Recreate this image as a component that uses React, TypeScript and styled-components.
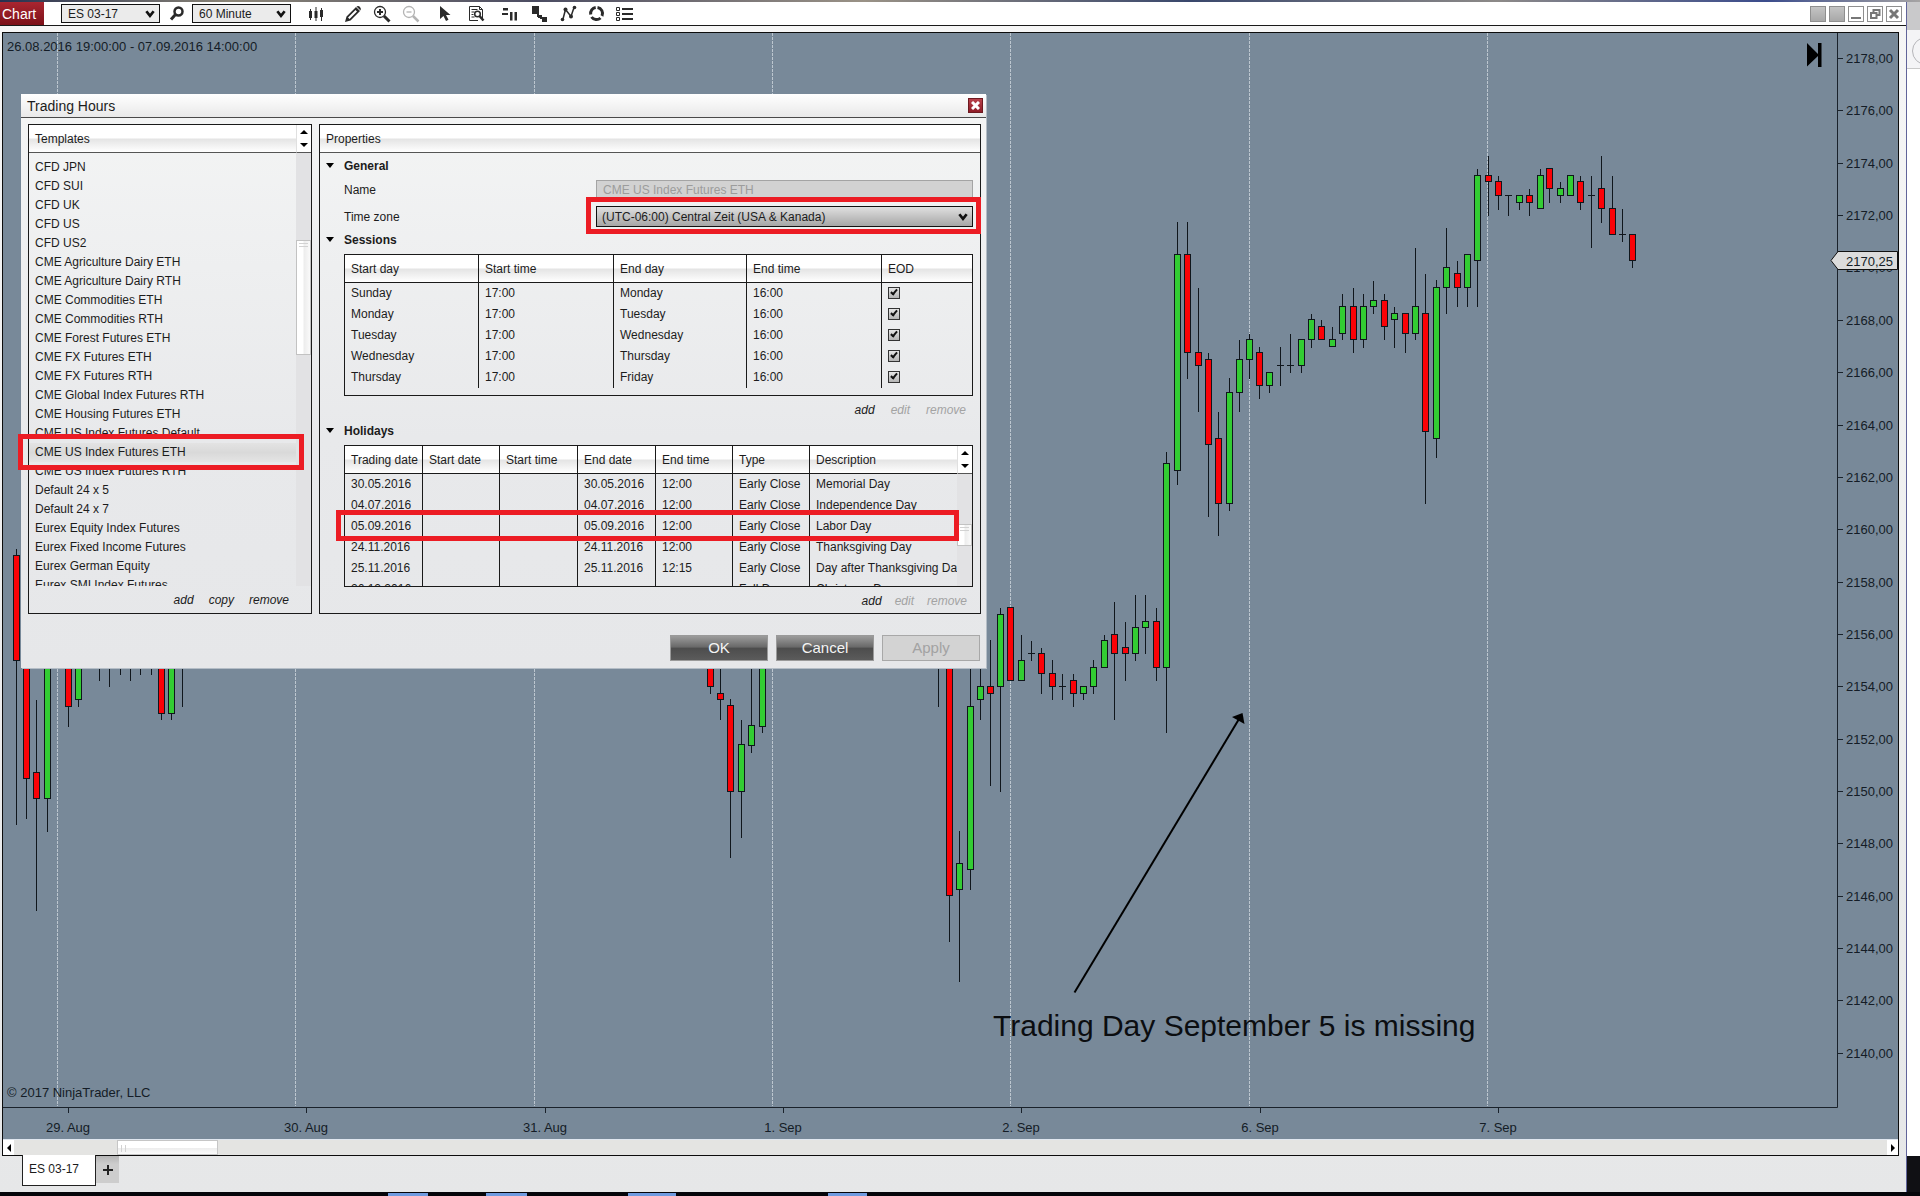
import React from "react";
import styled, { createGlobalStyle, css } from "styled-components";

const GlobalStyle = createGlobalStyle`
  *, *::before, *::after { box-sizing: border-box; }
  body {
    margin: 0;
    background: #08080c;
    font-family: "Liberation Sans", Arial, sans-serif;
    font-size: 12px;
    line-height: 16px;
    color: #1c1c1c;
  }
  button, input, select { font: inherit; color: inherit; }
`;

const headerGradient = css`
  background: linear-gradient(#ffffff 0%, #ffffff 48%, #e4e4e4 52%, #ffffff 100%);
`;

/* ---------- desktop behind the window ---------- */

const Desktop = styled.div`
  display: grid;
  grid-template-columns: minmax(0, 1fr) 13px;
  grid-template-rows: 2px minmax(0, 1fr) 4px;
  height: 100vh;
  overflow: hidden;
`;

const Wallpaper = styled.div`
  grid-column: 1 / -1;
  background: linear-gradient(90deg, #27304f, #8b8577 12%, #4b4c62 28%, #9a9286 45%, #39476c 62%, #8d8a88 78%, #3b4c8c 92%, #a6a4a4);
`;

const Taskbar = styled.div`
  grid-column: 1 / -1;
  background: #05050a;
`;

const TaskSvg = styled.svg`
  display: block;
  width: 100%;
  height: 4px;
`;

const Neighbour = styled.div`
  display: flex;
  flex-direction: column;
  background: #ffffff;
  overflow: hidden;
`;

const NeighbourTitle = styled.div`
  height: 28px;
  background: #c9c9cb;
`;

const NeighbourBar = styled.div`
  height: 39px;
  padding: 7px 0 0 5px;
  background: #f4f4f6;
  border-bottom: 1px solid #c9c9c9;
`;

const NeighbourRing = styled.div`
  width: 28px;
  height: 28px;
  border: 1px solid #b5b5b9;
  border-radius: 50%;
`;

const NeighbourBase = styled.div`
  height: 36px;
  margin-top: auto;
  background: #101014;
`;

const Window = styled.div`
  display: flex;
  flex-direction: column;
  min-height: 0;
  background: linear-gradient(#f6f6f6, #e6e7e8);
  border-right: 1px solid #61649a;
`;

/* ---------- toolbar ---------- */

const Toolbar = styled.header`
  display: flex;
  align-items: center;
  flex: none;
  height: 24px;
  padding-right: 4px;
  background: #ffffff;
  border-bottom: 1px solid #1a1a1a;
`;

const Badge = styled.div`
  display: flex;
  align-items: center;
  height: 23px;
  width: 44px;
  padding-left: 2px;
  margin-right: 17px;
  font-size: 14px;
  color: #ffffff;
  background: linear-gradient(#a92630, #7c1019);
`;

const SelectBox = styled.div`
  position: relative;
  width: 99px;
`;

const ToolSelect = styled.select`
  display: block;
  width: 100%;
  height: 19px;
  padding: 0 0 0 6px;
  appearance: none;
  border: 1px solid #111;
  border-radius: 0;
  background: #ebebeb;
`;

const Chevron = styled.svg`
  position: absolute;
  right: 5px;
  top: 50%;
  width: 10px;
  height: 8px;
  margin-top: -4px;
  fill: none;
  stroke: #111;
  stroke-width: 3;
  pointer-events: none;
`;

const IconButton = styled.button`
  display: grid;
  place-items: center;
  width: 20px;
  height: 20px;
  padding: 0;
  border: 0;
  background: none;
  color: #2a2a2a;
  &:disabled { color: #b4b4b4; }
  svg { display: block; fill: currentColor; stroke: none; }
`;

const SearchButton = styled(IconButton)`
  width: 20px;
  margin: 0 6px;
`;

const Tools = styled.div<{ $gap?: number; $lead?: number }>`
  display: flex;
  align-items: center;
  gap: ${(p) => p.$gap ?? 9}px;
  margin-left: ${(p) => p.$lead ?? 15}px;
`;

const ToolPair = styled.div`
  display: flex;
  gap: 17px;
`;

const WindowButtons = styled.div`
  display: flex;
  gap: 3px;
  margin-left: auto;
`;

const WindowButton = styled.button<{ $filled?: boolean }>`
  display: grid;
  place-items: center;
  width: 16px;
  height: 16px;
  padding: 0;
  border: 1px solid #8f8f8f;
  background: ${(p) => (p.$filled ? "linear-gradient(#c4c4c4, #a8a8a8)" : "#ffffff")};
  svg { display: block; fill: none; stroke: #777; stroke-width: 2; }
`;

/* ---------- chart ---------- */

const Body = styled.main`
  display: flex;
  flex-direction: column;
  flex: 1;
  min-height: 0;
  padding: 6px 7px 0 2px;
`;

const Frame = styled.section`
  position: relative;
  display: flex;
  flex-direction: column;
  flex: 1;
  min-height: 0;
  border: 1px solid #0c0c0c;
`;

const ChartSvg = styled.svg`
  display: block;
  flex: 1;
  width: 100%;
  min-height: 0;
  background: #788999;
  font-size: 13px;
  fill: #141c26;
`;

const ScrollStrip = styled.div`
  display: flex;
  flex: none;
  height: 16px;
  border-top: 1px solid #dfe6ef;
  background: #e4e4e2;
`;

const StripButton = styled.button`
  display: grid;
  place-items: center;
  width: 11px;
  padding: 0;
  border: 0;
  background: #ffffff;
`;

const StripTrack = styled.div`
  flex: 1;
  padding-left: 103px;
`;

const StripThumb = styled.div`
  width: 101px;
  height: 15px;
  padding: 4px 3px;
  border: 1px solid #c6c6c6;
  background: linear-gradient(#ffffff 50%, #ececec 52%, #fbfbfb);
`;

const Grip = styled.div<{ $vertical?: boolean }>`
  ${(p) => p.$vertical
    ? "width: 5px; height: 7px; border-left: 1px solid #d2d2d2; border-right: 1px solid #d2d2d2;"
    : "width: 100%; height: 4px; border-top: 1px solid #d2d2d2; border-bottom: 1px solid #d2d2d2;"}
`;

const TabRow = styled.nav`
  display: flex;
  align-items: flex-start;
  flex: none;
  height: 36px;
  padding-left: 20px;
`;

const Tab = styled.button`
  z-index: 1;
  width: 74px;
  height: 31px;
  margin-top: -1px;
  padding: 0 8px 2px 6px;
  text-align: left;
  border: 1px solid #222;
  border-top: 0;
  background: #ffffff;
`;

const AddTab = styled.button`
  display: grid;
  place-items: center;
  width: 23px;
  height: 27px;
  padding: 0;
  border: 0;
  background: linear-gradient(#b5b5b5, #cdcdcd 30%);
`;

/* ---------- dialog ---------- */

const Dialog = styled.div`
  position: absolute;
  left: 18px;
  top: 61px;
  width: 965px;
  max-width: calc(100% - 36px);
  background: linear-gradient(#f4f5f5, #e8e9eb 60%, #e6e7e9);
  box-shadow: 1px 1px 0 #b4bdc6;
`;

const DialogTitle = styled.div`
  display: flex;
  align-items: center;
  justify-content: space-between;
  height: 24px;
  padding: 0 3px 0 6px;
  font-size: 14px;
  background: linear-gradient(#ffffff, #e9e9e9);
  border-bottom: 1px solid #4a4a4a;
`;

const CloseButton = styled.button`
  display: grid;
  place-items: center;
  width: 15px;
  height: 15px;
  padding: 0;
  border: 1px solid #6d1a20;
  background: linear-gradient(#b9414b, #8f1c27);
`;

const Columns = styled.div`
  display: grid;
  grid-template-columns: 284px minmax(0, 1fr);
  gap: 7px;
  padding: 6px 5px 0 7px;
`;

const Panel = styled.section`
  display: flex;
  flex-direction: column;
  border: 1px solid #1a1a1a;
`;

const PanelHeader = styled.h2`
  flex: none;
  height: 28px;
  margin: 0;
  padding: 6px;
  font-size: 12px;
  font-weight: 400;
  border-bottom: 1px solid #555;
  ${headerGradient}
`;

const Scrollable = styled.div`
  display: flex;
  flex: none;
`;

const Grow = styled.div`
  flex: 1;
  min-width: 0;
`;

const VBar = styled.div`
  display: flex;
  flex-direction: column;
  flex: none;
  width: 15px;
  background: #e2e2e4;
`;

const VArrows = styled.div`
  display: flex;
  flex-direction: column;
  justify-content: space-evenly;
  height: 28px;
  background: #ffffff;
  border-left: 1px solid #e0e0e0;
  border-bottom: 1px solid #555;
`;

const VArrow = styled.button`
  display: grid;
  place-items: center;
  height: 12px;
  padding: 0;
  border: 0;
  background: none;
`;

const VThumb = styled.div<{ $offset: number; $size: number }>`
  height: ${(p) => p.$size}px;
  margin-top: ${(p) => p.$offset}px;
  padding: 2px;
  border: 1px solid #c2c2c2;
  background: linear-gradient(90deg, #ffffff 45%, #ededed 55%, #fafafa);
`;

const TemplateList = styled.ul`
  height: 433px;
  margin: 0;
  padding: 5px 0 0;
  overflow: hidden;
  list-style: none;
`;

const TemplateItem = styled.li<{ $selected?: boolean }>`
  height: 19px;
  padding: 1px 6px;
  white-space: nowrap;
  ${(p) => p.$selected && "background: linear-gradient(#e3e3e3, #d9d9d9 50%, #e4e4e4);"}
`;

const Actions = styled.div<{ $gap: number; $end: number }>`
  display: flex;
  justify-content: flex-end;
  gap: ${(p) => p.$gap}px;
  height: 22px;
  padding: 6px ${(p) => p.$end}px 0 0;
`;

const ActionButton = styled.button`
  padding: 0;
  border: 0;
  background: none;
  font-style: italic;
  line-height: 16px;
  &:disabled { color: #a3a3a3; }
`;

const Properties = styled.div`
  padding: 0 7px 4px 6px;
`;

const Group = styled.h3`
  display: flex;
  align-items: center;
  gap: 10px;
  height: 27px;
  margin: 0;
  padding-bottom: 2px;
  font-size: 12px;
  font-weight: 700;
`;

const Content = styled.div`
  padding-left: 18px;
`;

const Fields = styled.div`
  display: grid;
  grid-template-columns: 252px minmax(0, 1fr);
  row-gap: 7px;
  align-items: center;
`;

const NameInput = styled.input`
  width: 100%;
  height: 19px;
  padding: 0 6px;
  border: 1px solid #a4a4a4;
  border-radius: 0;
  background: #d2d2d2;
  color: #9c9c9c;
`;

const ZoneBox = styled.div`
  position: relative;
`;

const ZoneSelect = styled.select`
  display: block;
  width: 100%;
  height: 21px;
  padding: 0 5px;
  appearance: none;
  border: 1px solid #111;
  border-radius: 0;
  background: linear-gradient(#e0e0e0, #a6a6a6);
`;

const Grid = styled.div`
  display: flex;
  height: 142px;
  overflow: hidden;
  border: 1px solid #1a1a1a;
`;

const Table = styled.table`
  width: 100%;
  table-layout: fixed;
  border-spacing: 0;
`;

const Th = styled.th<{ $w?: number }>`
  width: ${(p) => (p.$w ? p.$w + "px" : "auto")};
  height: 28px;
  padding: 0 5px 0 6px;
  overflow: hidden;
  white-space: nowrap;
  text-align: left;
  font-weight: 400;
  border-right: 1px solid #1a1a1a;
  border-bottom: 1px solid #1a1a1a;
  ${headerGradient}
  &:last-child { border-right: 0; }
`;

const Td = styled.td`
  height: 21px;
  padding: 0 5px 1px 6px;
  overflow: hidden;
  white-space: nowrap;
  border-right: 1px solid #1a1a1a;
  &:last-child { border-right: 0; }
`;

const Check = styled.input`
  display: block;
  position: relative;
  width: 12px;
  height: 12px;
  margin: 0;
  appearance: none;
  border: 1px solid #333;
  background: linear-gradient(#e6e6e6, #b4b4b4);
  &:checked::after {
    content: "";
    position: absolute;
    left: 3px;
    top: 0;
    width: 4px;
    height: 7px;
    border: solid #111;
    border-width: 0 2px 2px 0;
    transform: rotate(40deg);
  }
`;

const DialogButtons = styled.div`
  display: flex;
  justify-content: flex-end;
  gap: 8px;
  padding: 21px 6px 7px 0;
`;

const DialogButton = styled.button`
  width: 98px;
  height: 26px;
  padding: 0 0 1px;
  font-size: 15px;
  color: #f4f4f4;
  border: 1px solid #9a9a9a;
  background: linear-gradient(#9c9c9c, #6a6a6a 45%, #4d4d4d 52%, #5b5b5b);
  &:disabled {
    color: #a2a2a2;
    border-color: #a8a8a8;
    background: #d3d3d3;
  }
`;

const Marker = styled.div<{ $x: number; $y: number; $w: number; $h: number }>`
  position: absolute;
  left: ${(p) => p.$x}px;
  top: ${(p) => p.$y}px;
  width: ${(p) => p.$w}px;
  height: ${(p) => p.$h}px;
  border: 5px solid #ec1c24;
  pointer-events: none;
`;

/* ---------- data ---------- */

const templates = [
  "CFD JPN", "CFD SUI", "CFD UK", "CFD US", "CFD US2",
  "CME Agriculture Dairy ETH", "CME Agriculture Dairy RTH",
  "CME Commodities ETH", "CME Commodities RTH", "CME Forest Futures ETH",
  "CME FX Futures ETH", "CME FX Futures RTH", "CME Global Index Futures RTH",
  "CME Housing Futures ETH", "CME US Index Futures Default",
  "CME US Index Futures ETH", "CME US Index Futures RTH",
  "Default 24 x 5", "Default 24 x 7", "Eurex Equity Index Futures",
  "Eurex Fixed Income Futures", "Eurex German Equity", "Eurex SMI Index Futures",
];

const sessions = [
  ["Sunday", "17:00", "Monday", "16:00"],
  ["Monday", "17:00", "Tuesday", "16:00"],
  ["Tuesday", "17:00", "Wednesday", "16:00"],
  ["Wednesday", "17:00", "Thursday", "16:00"],
  ["Thursday", "17:00", "Friday", "16:00"],
];

const holidayColumns: [string, number?][] = [
  ["Trading date", 78], ["Start date", 77], ["Start time", 78], ["End date", 78],
  ["End time", 77], ["Type", 77], ["Description"],
];

const holidays = [
  ["30.05.2016", "", "", "30.05.2016", "12:00", "Early Close", "Memorial Day"],
  ["04.07.2016", "", "", "04.07.2016", "12:00", "Early Close", "Independence Day"],
  ["05.09.2016", "", "", "05.09.2016", "12:00", "Early Close", "Labor Day"],
  ["24.11.2016", "", "", "24.11.2016", "12:00", "Early Close", "Thanksgiving Day"],
  ["25.11.2016", "", "", "25.11.2016", "12:15", "Early Close", "Day after Thanksgiving Day"],
  ["26.12.2016", "", "", "", "", "Full Day", "Christmas Day"],
];

/* x, high, body top, body bottom, low, kind (r: down, g: up, d: unchanged, w: wick only) */
type Candle = [number, number, number, number, number, "r" | "g" | "d" | "w"];
const candles: Candle[] = [
  [16, 549, 555, 660, 824, "r"], [26, 600, 600, 778, 818, "r"], [36, 700, 772, 798, 910, "r"],
  [47, 600, 600, 798, 831, "g"], [68, 600, 600, 706, 726, "r"], [78, 600, 600, 699, 706, "g"],
  [99, 640, 640, 640, 680, "w"], [109, 640, 640, 640, 686, "w"], [120, 640, 640, 640, 674, "w"],
  [130, 640, 640, 640, 680, "w"], [140, 640, 640, 640, 674, "w"], [151, 640, 640, 640, 674, "w"],
  [161, 620, 620, 713, 719, "r"], [171, 620, 620, 713, 719, "g"], [182, 640, 640, 640, 706, "w"],
  [710, 640, 640, 686, 693, "r"], [720, 640, 693, 699, 719, "r"], [730, 699, 705, 791, 857, "r"],
  [741, 720, 744, 791, 837, "g"], [751, 640, 725, 745, 752, "g"], [762, 600, 640, 726, 732, "g"],
  [938, 600, 640, 640, 706, "w"], [949, 600, 620, 895, 941, "r"], [959, 831, 863, 889, 981, "g"],
  [970, 600, 706, 869, 889, "g"], [980, 640, 686, 699, 719, "g"], [990, 640, 686, 693, 785, "r"],
  [1000, 608, 614, 686, 791, "g"], [1010, 607, 607, 680, 680, "r"], [1021, 635, 660, 680, 680, "g"],
  [1031, 641, 653, 653, 660, "d"], [1041, 648, 653, 673, 693, "r"], [1052, 660, 673, 686, 699, "r"],
  [1062, 674, 686, 686, 699, "d"], [1073, 674, 680, 693, 706, "r"], [1083, 686, 686, 693, 699, "g"],
  [1093, 660, 667, 686, 693, "g"], [1104, 635, 640, 667, 667, "g"], [1114, 602, 634, 653, 719, "r"],
  [1125, 622, 647, 653, 680, "r"], [1135, 595, 627, 653, 660, "g"], [1145, 595, 621, 627, 653, "g"],
  [1156, 608, 621, 667, 680, "r"], [1166, 452, 463, 667, 732, "g"], [1177, 222, 254, 470, 484, "g"],
  [1187, 222, 254, 352, 378, "r"], [1198, 288, 352, 365, 411, "r"], [1208, 353, 359, 444, 516, "r"],
  [1218, 412, 438, 503, 535, "r"], [1229, 378, 392, 503, 510, "g"], [1239, 340, 359, 392, 411, "g"],
  [1249, 334, 339, 359, 378, "g"], [1259, 347, 352, 385, 398, "r"], [1269, 372, 372, 385, 392, "g"],
  [1280, 347, 365, 365, 385, "d"], [1290, 334, 365, 365, 372, "d"], [1301, 339, 339, 365, 372, "g"],
  [1311, 314, 319, 339, 347, "g"], [1321, 320, 326, 339, 339, "r"], [1332, 327, 339, 346, 346, "g"],
  [1342, 294, 306, 333, 339, "g"], [1353, 288, 306, 339, 352, "r"], [1363, 294, 306, 339, 347, "g"],
  [1373, 281, 300, 306, 313, "g"], [1384, 294, 300, 326, 339, "r"], [1394, 307, 313, 319, 347, "g"],
  [1405, 313, 313, 333, 352, "r"], [1415, 248, 306, 333, 339, "g"], [1425, 274, 313, 431, 503, "r"],
  [1436, 280, 287, 438, 457, "g"], [1446, 228, 267, 287, 313, "g"], [1457, 261, 273, 287, 306, "r"],
  [1467, 254, 254, 287, 306, "g"], [1477, 169, 175, 260, 306, "g"], [1488, 156, 175, 181, 215, "r"],
  [1498, 176, 181, 195, 209, "r"], [1508, 195, 195, 195, 215, "d"], [1519, 195, 195, 202, 209, "g"],
  [1529, 189, 195, 202, 215, "r"], [1540, 169, 175, 208, 208, "g"], [1549, 168, 168, 188, 202, "r"],
  [1560, 182, 188, 195, 202, "g"], [1570, 175, 175, 195, 195, "g"], [1580, 176, 181, 202, 209, "r"],
  [1591, 176, 195, 195, 247, "d"], [1601, 156, 188, 208, 222, "r"], [1612, 176, 208, 234, 234, "r"],
  [1622, 209, 234, 234, 241, "d"], [1632, 234, 234, 260, 267, "r"],
];

const days: [number, string][] = [
  [57, "29. Aug"], [295, "30. Aug"], [534, "31. Aug"], [772, "1. Sep"],
  [1010, "2. Sep"], [1249, "6. Sep"], [1487, "7. Sep"],
];

const prices = Array.from({ length: 20 }, (_, i) => 2178 - i * 2);
const priceY = (price: number) => Math.round(58 + (2178 - price) * 26.18);

/* ---------- parts ---------- */

function PriceChart() {
  return (
    <ChartSvg viewBox="3 33 1895 1106" preserveAspectRatio="none" role="img" aria-label="ES 03-17, 60 Minute">
      {days.map(([x]) => (
        <line key={x} x1={x + 0.5} x2={x + 0.5} y1={33} y2={1106} stroke="#bcc6cf" strokeDasharray="3 1" />
      ))}
      <text x={7} y={51}>26.08.2016 19:00:00 - 07.09.2016 14:00:00</text>
      <text x={7} y={1097}>© 2017 NinjaTrader, LLC</text>
      {candles.map(([x, high, top, bottom, low, kind]) => (
        <g key={x} stroke="#10161c">
          <line x1={x + 0.5} x2={x + 0.5} y1={high} y2={low + 1} />
          {kind === "d" && <line x1={x - 3} x2={x + 4} y1={top + 0.5} y2={top + 0.5} />}
          {(kind === "r" || kind === "g") && (
            <rect x={x - 2.5} y={top + 0.5} width={6} height={bottom - top} fill={kind === "r" ? "#fb0207" : "#33cc33"} />
          )}
        </g>
      ))}
      <path d="M3 1107.5H1837.5V33" fill="none" stroke="#1a222b" />
      {days.map(([x, label]) => (
        <g key={label}>
          <path d={`M${x + 11.5} 1108v5`} stroke="#1a222b" />
          <text x={x + 11} y={1132} textAnchor="middle">{label}</text>
        </g>
      ))}
      {prices.map((price) => (
        <g key={price}>
          <path d={`M1838 ${priceY(price) + 0.5}h5`} stroke="#1a222b" />
          <text x={1846} y={priceY(price) + 5}>{price},00</text>
        </g>
      ))}
      <path d="M1831 260.5L1838 251.5H1897.5V269.5H1838Z" fill="#dcdcdc" stroke="#111" />
      <text x={1846} y={266}>2170,25</text>
      <path d="M1807 43L1818 54V43H1821.500V67H1818V56L1807 66.500Z" fill="#000" />
      <path d="M1074.500 992.500L1239 719" stroke="#000" strokeWidth={2} />
      <path d="M1242.500 713L1232 717L1244.500 724Z" fill="#000" />
      <text x={993} y={1036} fontSize={30} fill="#0b0d10">Trading Day September 5 is missing</text>
    </ChartSvg>
  );
}

function Triangle({ d, w, h }: { d: string; w: number; h: number }) {
  return <svg width={w} height={h} viewBox={`0 0 ${w} ${h}`}><path d={d} fill="#000" /></svg>;
}

function Arrows({ name }: { name: string }) {
  return (
    <VArrows>
      <VArrow aria-label={`Scroll ${name} up`}><Triangle w={8} h={4} d="M0 4L4 0L8 4Z" /></VArrow>
      <VArrow aria-label={`Scroll ${name} down`}><Triangle w={8} h={4} d="M0 0H8L4 4Z" /></VArrow>
    </VArrows>
  );
}

function Down() {
  return <Chevron viewBox="0 0 11 8"><path d="M1.500 1L5.500 6L9.500 1" /></Chevron>;
}

function GroupTitle({ children }: { children: string }) {
  return <Group><Triangle w={8} h={5} d="M0 0H8L4 5Z" />{children}</Group>;
}

function MainToolbar() {
  return (
    <Toolbar>
      <Badge>Chart</Badge>
      <SelectBox>
        <ToolSelect aria-label="Instrument"><option>ES 03-17</option></ToolSelect>
        <Down />
      </SelectBox>
      <SearchButton aria-label="Find instrument">
        <svg width="15" height="15" viewBox="0 0 15 15"><g fill="none" stroke="currentColor"><circle cx="9.500" cy="5.500" r="4" strokeWidth="2.500" /><path d="M6.500 8.500L2 13.500" strokeWidth="3" /></g></svg>
      </SearchButton>
      <SelectBox>
        <ToolSelect aria-label="Interval"><option>60 Minute</option></ToolSelect>
        <Down />
      </SelectBox>
      <Tools>
        <ToolPair>
          <IconButton aria-label="Chart style">
            <svg width="16" height="16" viewBox="0 0 16 16"><path d="M1 5h3v7H1zM6.500 5h3v7h-3zM12 4h3v7h-3zM2 3h1v11H2zM7.500 1h1v14h-1zM13 2h1v13h-1z" /></svg>
          </IconButton>
          <IconButton aria-label="Drawing tools">
            <svg width="18" height="18" viewBox="0 0 18 18"><path d="M1 17l1.500-5.500L12 2l4 4-9.500 9.500zM4 12.500L5.500 14 13 6.500 11.500 5z" fillRule="evenodd" /><path d="M12.500 1.500q2-1 3.500.5t.500 3.500z" /></svg>
          </IconButton>
        </ToolPair>
        <IconButton aria-label="Zoom in">
          <svg width="18" height="18" viewBox="0 0 18 18"><g fill="none" stroke="currentColor"><circle cx="7" cy="7" r="5.500" strokeWidth="1.300" /><path d="M4 7h6M7 4v6" strokeWidth="2" /><path d="M11 11l5.500 5.500" strokeWidth="3" /></g></svg>
        </IconButton>
        <IconButton aria-label="Zoom out" disabled>
          <svg width="18" height="18" viewBox="0 0 18 18"><g fill="none" stroke="currentColor"><circle cx="7" cy="7" r="5.500" strokeWidth="1.300" /><path d="M4.500 7h5" strokeWidth="1.300" /><path d="M11 11l5.500 5.500" strokeWidth="2.500" /></g></svg>
        </IconButton>
      </Tools>
      <Tools $gap={11} $lead={14}>
        <IconButton aria-label="Cursor">
          <svg width="14" height="17" viewBox="0 0 14 17"><path d="M2 1v13l3.500-3 2.500 5 2.500-1.200L8 10h4.500z" /></svg>
        </IconButton>
        <IconButton aria-label="Data box">
          <svg width="17" height="17" viewBox="0 0 17 17"><g fill="none" stroke="currentColor"><path d="M10 15.500H1.500V1.500h10l3 3v9M11.500 1.500v3h3M3.500 4.500h6M3.500 7h3M3.500 9.500h2M3.500 12h3" /><circle cx="9.500" cy="9" r="2.800" strokeWidth="1.500" /><path d="M11.500 11l4 4.500" strokeWidth="2.500" /></g></svg>
        </IconButton>
      </Tools>
      <Tools $gap={9} $lead={14}>
        <IconButton aria-label="Strategies">
          <svg width="18" height="14" viewBox="0 0 18 14"><path d="M2 1h5v2.500H2zM1 6h6v2H1zM9 5h2.500v8.500H9zM13.500 5H16v8.500h-2.500z" /></svg>
        </IconButton>
        <IconButton aria-label="Chart trader">
          <svg width="17" height="16" viewBox="0 0 17 16"><path d="M1 0h7v8H1zM7 9h4v3H7zM11 11h5v5h-5zM6 7h2v4H6zM9 11h3v2H9z" /></svg>
        </IconButton>
        <IconButton aria-label="Indicators">
          <svg width="17" height="17" viewBox="0 0 17 17"><path d="M3 14L5.500 4.500l5.500 7 3-9" fill="none" stroke="currentColor" strokeWidth="1.500" /><circle cx="2.500" cy="14.500" r="1.800" /><circle cx="5.500" cy="4.500" r="2" /><circle cx="11" cy="11.500" r="2" /><circle cx="14.500" cy="2.500" r="1.800" /></svg>
        </IconButton>
      </Tools>
      <Tools $gap={8} $lead={8}>
        <IconButton aria-label="Reload">
          <svg width="17" height="17" viewBox="0 0 17 17"><g fill="none" stroke="currentColor" strokeWidth="3"><path d="M9.500 2.500a6 6 0 0 1 4.500 8.500M12.500 13a6 6 0 0 1-9-1M2.700 9.500a6 6 0 0 1 5-7" /></g></svg>
        </IconButton>
        <IconButton aria-label="Properties">
          <svg width="17" height="16" viewBox="0 0 17 16"><path d="M6 2h11v2H6zM6 7h11v2H6zM6 12h11v2H6z" /><g fill="none" stroke="currentColor"><path d="M.5 1.500h3v3h-3zM.5 6.500h3v3h-3zM.5 11.500h3v3h-3z" /></g></svg>
        </IconButton>
      </Tools>
      <WindowButtons>
        <WindowButton $filled aria-label="Instrument link" />
        <WindowButton $filled aria-label="Interval link" />
        <WindowButton aria-label="Minimize"><svg width="12" height="12"><path d="M1 10h10" /></svg></WindowButton>
        <WindowButton aria-label="Restore"><svg width="12" height="12"><path d="M4.500 4V2h6v5H8M2 5h5.500v5H2z" /></svg></WindowButton>
        <WindowButton aria-label="Close"><svg width="12" height="12"><path d="M2 2l8 8M10 2l-8 8" strokeWidth="3" /></svg></WindowButton>
      </WindowButtons>
    </Toolbar>
  );
}

function TradingHours() {
  return (
    <Dialog role="dialog" aria-label="Trading Hours">
      <DialogTitle>
        Trading Hours
        <CloseButton aria-label="Close dialog">
          <svg width="9" height="9" viewBox="0 0 9 9"><path d="M1 1l7 7M8 1L1 8" stroke="#fff" strokeWidth="3" /></svg>
        </CloseButton>
      </DialogTitle>
      <Columns>
        <Panel>
          <Scrollable>
            <Grow>
              <PanelHeader>Templates</PanelHeader>
              <TemplateList>
                {templates.map((name) => (
                  <TemplateItem key={name} $selected={name === "CME US Index Futures ETH"}>{name}</TemplateItem>
                ))}
              </TemplateList>
            </Grow>
            <VBar>
              <Arrows name="templates" />
              <VThumb $offset={87} $size={115}><Grip /></VThumb>
            </VBar>
          </Scrollable>
          <Actions $gap={15} $end={22}>
            <ActionButton>add</ActionButton>
            <ActionButton>copy</ActionButton>
            <ActionButton>remove</ActionButton>
          </Actions>
        </Panel>
        <Panel>
          <PanelHeader>Properties</PanelHeader>
          <Properties>
            <GroupTitle>General</GroupTitle>
            <Content>
              <Fields>
                <label htmlFor="template-name">Name</label>
                <NameInput id="template-name" disabled defaultValue="CME US Index Futures ETH" />
                <label htmlFor="time-zone">Time zone</label>
                <ZoneBox>
                  <ZoneSelect id="time-zone"><option>(UTC-06:00) Central Zeit (USA &amp; Kanada)</option></ZoneSelect>
                  <Down />
                </ZoneBox>
              </Fields>
            </Content>
            <GroupTitle>Sessions</GroupTitle>
            <Content>
              <Grid>
                <Grow>
                  <Table>
                    <thead>
                      <tr>
                        <Th $w={134}>Start day</Th>
                        <Th $w={135}>Start time</Th>
                        <Th $w={133}>End day</Th>
                        <Th $w={135}>End time</Th>
                        <Th>EOD</Th>
                      </tr>
                    </thead>
                    <tbody>
                      {sessions.map((row) => (
                        <tr key={row[0]}>
                          {row.map((value, i) => <Td key={i}>{value}</Td>)}
                          <Td><Check type="checkbox" defaultChecked aria-label={`EOD ${row[0]}`} /></Td>
                        </tr>
                      ))}
                    </tbody>
                  </Table>
                </Grow>
              </Grid>
              <Actions $gap={16} $end={7}>
                <ActionButton>add</ActionButton>
                <ActionButton disabled>edit</ActionButton>
                <ActionButton disabled>remove</ActionButton>
              </Actions>
            </Content>
            <GroupTitle>Holidays</GroupTitle>
            <Content>
              <Grid>
                <Grow>
                  <Table>
                    <thead>
                      <tr>{holidayColumns.map(([name, w]) => <Th key={name} $w={w}>{name}</Th>)}</tr>
                    </thead>
                    <tbody>
                      {holidays.map((row) => (
                        <tr key={row[0]}>{row.map((value, i) => <Td key={i}>{value}</Td>)}</tr>
                      ))}
                    </tbody>
                  </Table>
                </Grow>
                <VBar>
                  <Arrows name="holidays" />
                  <VThumb $offset={50} $size={22}><Grip /></VThumb>
                </VBar>
              </Grid>
              <Actions $gap={13} $end={6}>
                <ActionButton>add</ActionButton>
                <ActionButton disabled>edit</ActionButton>
                <ActionButton disabled>remove</ActionButton>
              </Actions>
            </Content>
          </Properties>
        </Panel>
      </Columns>
      <DialogButtons>
        <DialogButton>OK</DialogButton>
        <DialogButton>Cancel</DialogButton>
        <DialogButton disabled>Apply</DialogButton>
      </DialogButtons>
      <Marker $x={565} $y={103} $w={395} $h={37} />
      <Marker $x={-3} $y={340} $w={286} $h={36} />
      <Marker $x={315} $y={416} $w={623} $h={31} />
    </Dialog>
  );
}

export default function App() {
  return (
    <Desktop>
      <GlobalStyle />
      <Wallpaper />
      <Window>
        <MainToolbar />
        <Body>
          <Frame>
            <PriceChart />
            <ScrollStrip>
              <StripButton aria-label="Scroll left"><Triangle w={4} h={8} d="M4 0V8L0 4Z" /></StripButton>
              <StripTrack><StripThumb><Grip $vertical /></StripThumb></StripTrack>
              <StripButton aria-label="Scroll right"><Triangle w={4} h={8} d="M0 0V8L4 4Z" /></StripButton>
            </ScrollStrip>
            <TradingHours />
          </Frame>
          <TabRow>
            <Tab>ES 03-17</Tab>
            <AddTab aria-label="Add tab">
              <svg width="10" height="10" viewBox="0 0 10 10"><path d="M5 0v10M0 5h10" stroke="#222" strokeWidth="2" /></svg>
            </AddTab>
          </TabRow>
        </Body>
      </Window>
      <Neighbour>
        <NeighbourTitle />
        <NeighbourBar><NeighbourRing /></NeighbourBar>
        <NeighbourBase />
      </Neighbour>
      <Taskbar>
        <TaskSvg viewBox="0 0 1920 4" preserveAspectRatio="none">
          <path d="M388 1h40v3h-40zM486 1h41v3h-41zM628 1h48v3h-48zM828 1h39v3h-39z" fill="#6f9be0" />
        </TaskSvg>
      </Taskbar>
    </Desktop>
  );
}
